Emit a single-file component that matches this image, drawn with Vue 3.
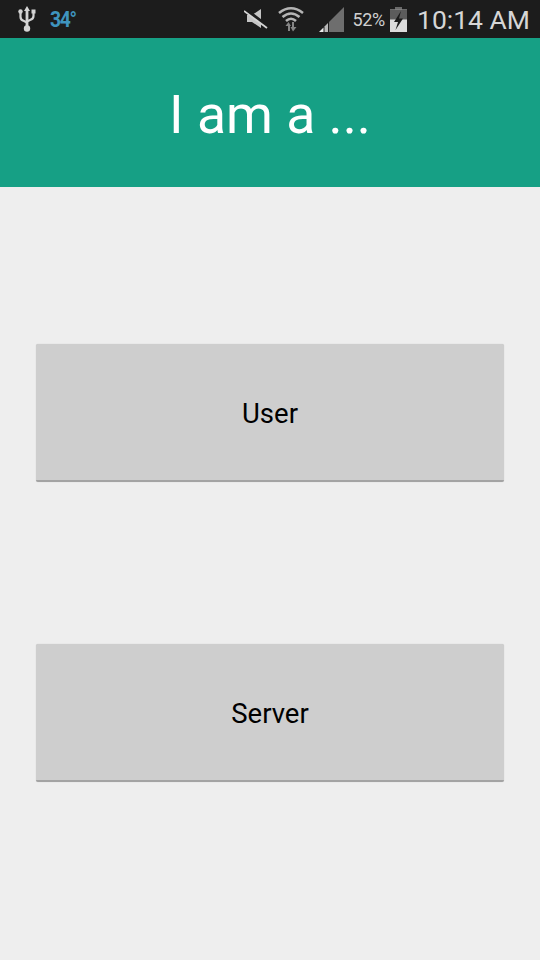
<template>
  <div class="screen">
    <!-- status bar -->
    <div class="status-bar">
      <div class="status-left">
        <svg class="icon-usb" width="18" height="26" viewBox="0 0 18 26">
          <path d="M9 0 L12 5 H10.4 V20 H7.6 V5 H6 Z" fill="#d4d4d4" />
          <circle cx="9" cy="22.5" r="3.2" fill="#d4d4d4" />
          <path d="M2.5 7 V11 Q2.5 14 6 15 L9 16.5" fill="none" stroke="#d4d4d4" stroke-width="2.2" />
          <path d="M15.5 7 V10 Q15.5 13 12 14 L9 15.5" fill="none" stroke="#d4d4d4" stroke-width="2.2" />
          <circle cx="2.5" cy="5.5" r="2.2" fill="#d4d4d4" />
          <rect x="13.5" y="3.5" width="4" height="4" fill="#d4d4d4" />
        </svg>
        <span class="temp">34°</span>
      </div>
      <div class="status-right">
        <svg class="icon-mute" width="24" height="22" viewBox="0 0 24 22">
          <path d="M3 7 H8 L17 1 V20 L8 14 H3 Z" fill="#c4c4c4" />
          <path d="M1 1 L23 18" stroke="#1c1c1c" stroke-width="3.5" />
          <path d="M0 3 L23 20" stroke="#d4d4d4" stroke-width="1.8" />
        </svg>
        <svg class="icon-wifi" width="26" height="26" viewBox="0 0 26 26">
          <path d="M1 7 Q13 -2.5 25 7" fill="none" stroke="#b4b4b4" stroke-width="2.6" />
          <path d="M4.5 11 Q13 4 21.5 11" fill="none" stroke="#b4b4b4" stroke-width="2.6" />
          <path d="M8 15 Q13 10.5 18 15" fill="none" stroke="#b4b4b4" stroke-width="2.6" />
          <path d="M10 25 V20 H7.5 L10.5 16 L13 20 H12 V25 Z" fill="#858585" />
          <path d="M16 16 V21 H18.5 L15 25.5 L12.5 21 H14 V16 Z" fill="#858585" />
        </svg>
        <svg class="icon-signal" width="25" height="25" viewBox="0 0 25 25">
          <path d="M10 25 V15 L25 0 V25 Z" fill="#6e6e6e" />
          <path d="M0 25 L4.5 20.5 V25 Z" fill="#ececec" />
          <path d="M5.5 25 V19.5 L9 16 V25 Z" fill="#b8b8b8" />
        </svg>
        <span class="battery-pct">52%</span>
        <svg class="icon-battery" width="17" height="25" viewBox="0 0 17 25">
          <rect x="5" y="0" width="7" height="3" fill="#6a6a6a" />
          <rect x="0" y="2.5" width="17" height="22.5" fill="#dcdcdc" />
          <rect x="0" y="2.5" width="17" height="10" fill="#5c5c5c" />
          <path d="M11 4 L4 15 H8 L5.5 23 L13 11.5 H9 Z" fill="#1c1c1c" />
        </svg>
        <span class="clock">10:14 AM</span>
      </div>
    </div>

    <div class="app-header">I am a ...</div>

    <div class="content">
      <div v-for="item in choices" :key="item" class="choice-btn">{{ item }}</div>
    </div>
  </div>
</template>

<script setup>
const choices = ['User', 'Server']
</script>

<style scoped>
.screen {
  width: 540px;
  height: 960px;
  display: flex;
  flex-direction: column;
  background: #eeeeee;
  font-family: Roboto, "Liberation Sans", sans-serif;
  overflow: hidden;
}
.status-bar {
  height: 38px;
  flex-shrink: 0;
  background: #1c1c1c;
  display: flex;
  justify-content: space-between;
  align-items: center;
  padding: 0 10px 0 18px;
  box-sizing: border-box;
}
.status-left,
.status-right {
  display: flex;
  align-items: center;
}
.temp {
  margin-left: 14px;
  font-size: 22px;
  font-weight: 700;
  color: #3f94bf;
  letter-spacing: -1.5px;
  transform: scaleX(0.88);
  transform-origin: left center;
}
.icon-wifi {
  margin-left: 10px;
}
.icon-signal {
  margin-left: 15px;
}
.battery-pct {
  margin-left: 8px;
  font-size: 18px;
  letter-spacing: -0.3px;
  color: #cfcfcf;
}
.icon-battery {
  margin-left: 5px;
}
.clock {
  margin-left: 10px;
  font-size: 26.5px;
  color: #d6d6d6;
}
.app-header {
  height: 149px;
  flex-shrink: 0;
  box-sizing: border-box;
  padding-top: 4px;
  background: #16a085;
  color: #ffffff;
  font-size: 53.5px;
  display: flex;
  align-items: center;
  justify-content: center;
}
.content {
  flex: 1;
  display: flex;
  flex-direction: column;
  gap: 162px;
  padding: 157px 36px 0;
}
.choice-btn {
  height: 138px;
  box-sizing: border-box;
  padding-top: 3px;
  background: #cecece;
  border-bottom: 2px solid #a3a3a3;
  border-radius: 2px;
  box-shadow: 0 0 1px rgba(0, 0, 0, 0.2);
  color: #000000;
  font-size: 27.5px;
  display: flex;
  align-items: center;
  justify-content: center;
}
</style>

<style>
html, body {
  margin: 0;
  background: #eeeeee;
}
</style>
